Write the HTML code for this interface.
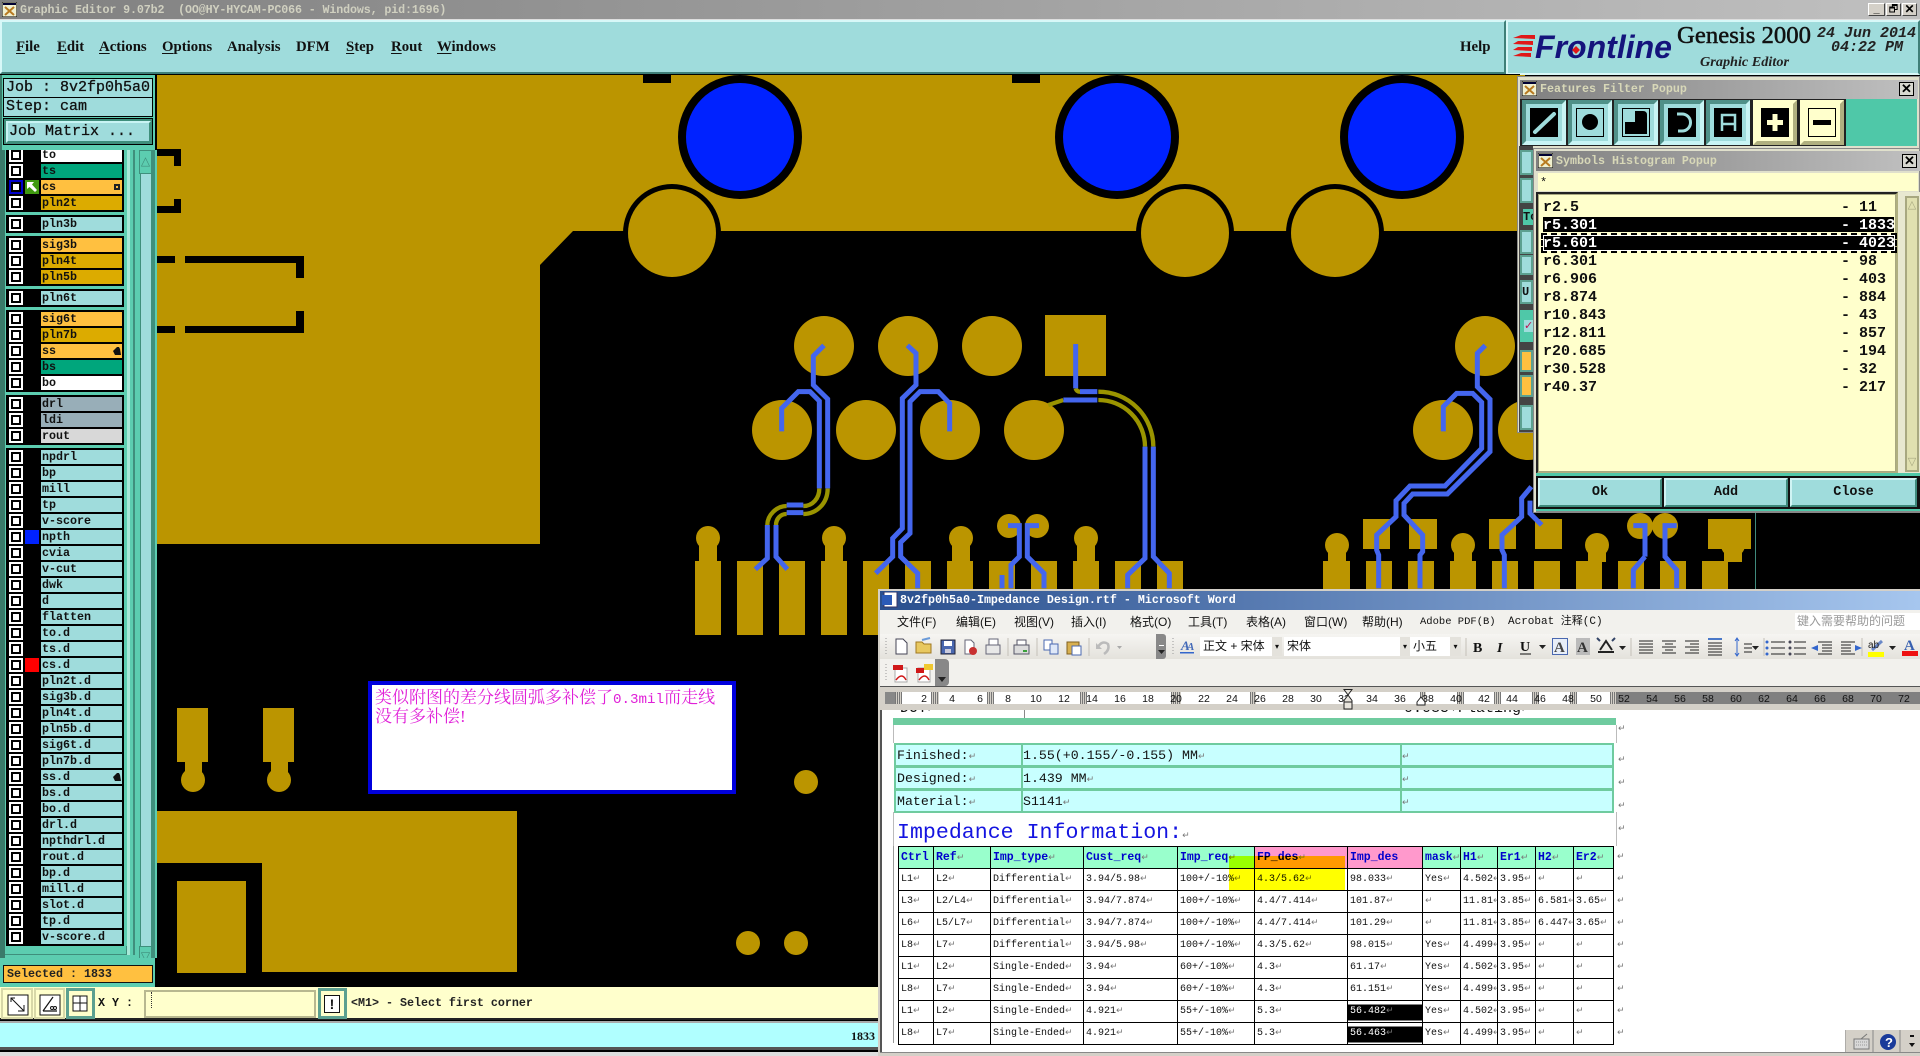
<!DOCTYPE html>
<html><head><meta charset="utf-8"><title>Graphic Editor</title>
<style>
html,body{margin:0;padding:0;width:1920px;height:1056px;overflow:hidden;background:#000}
div,span,b,table{box-sizing:border-box}
.a{position:absolute}
.m{font-family:"Liberation Mono","Noto Sans CJK SC",monospace}
.s{font-family:"Liberation Serif","Noto Serif CJK SC",serif}
.r{position:absolute;left:0;width:124px;height:14px}
.c{position:absolute;left:9px;top:0;width:14px;height:14px;background:#fff}
.c:after{content:"";position:absolute;left:2px;top:2px;width:10px;height:10px;border:2px solid #000;box-sizing:border-box}
.n{position:absolute;left:41px;top:0;width:81px;height:14px;line-height:14px;padding-left:1px;font:bold 11.67px/14px "Liberation Mono",monospace;color:#111;background:#9fdcdc;white-space:nowrap}
.o{background:#ffc040}.g{background:#dcab00}.t{background:#00a67c}.w{background:#fff}.b{background:#98aeb8}.e{background:#d8d8d8}
.grp{position:absolute;left:6px;width:118px;background:#000}
.menu{position:absolute;top:38px;font:bold 14.8px/18px "Liberation Serif",serif;color:#111}
.menu u{text-decoration-thickness:1px;text-underline-offset:2px}
.tb{background:linear-gradient(90deg,#808080,#c0c0c0);color:#d0d0c0;font:bold 11.67px/18px "Liberation Mono",monospace;white-space:pre}
.x{position:absolute;background:#d8d8d0;border:1px solid #000;width:15px;height:14px;font:bold 13px/12px "Liberation Sans",sans-serif;text-align:center;color:#000}
.fb{position:absolute;top:100px;width:44px;height:45px;background:#9fdcdc;border:4px solid;border-color:#4f9088 #c8f4f4 #c8f4f4 #4f9088}
.fb.y{background:#ffffcc;border-color:#ffffcc #b0b080 #b0b080 #ffffcc}
.fb svg{position:absolute;left:4px;top:4px}
.h{position:absolute;left:1543px;font:bold 15px/18px "Liberation Mono",monospace;color:#111;white-space:pre}
.h.sel{color:#fff}
.bt{position:absolute;top:478px;height:29px;background:#9fdcdc;border:2px solid;border-color:#d0f4f4 #3f8a7c #3f8a7c #d0f4f4;font:bold 13.5px/25px "Liberation Mono",monospace;text-align:center;color:#111}
.wm{position:absolute;top:614px;font:12px/16px "Liberation Sans","Noto Sans CJK SC",sans-serif;color:#111;white-space:nowrap}
.st{position:absolute;left:894px;width:720px;height:23px;background:#c8ffff;border:2px solid #6fcb9f;border-bottom-width:1px;font:13.25px/21px "Liberation Mono",monospace;color:#111}
.st span{position:absolute;top:0;white-space:nowrap}
.st span+span{border-left:2px solid #6fcb9f;height:21px;padding-left:2px}
i{font:normal 9px "DejaVu Sans",sans-serif;color:#777}
table{position:absolute;left:898px;top:846px;border-collapse:collapse;table-layout:fixed;width:735px;font:10px/14px "Liberation Mono",monospace;color:#111}
td{border:1px solid #000;height:21px;padding:0 0 0 2px;white-space:nowrap;overflow:hidden}
td.h1{background:#99ffcc;font:bold 11.5px/14px "Liberation Mono",monospace;color:#0000cc}
td.h2{background:#ff99cc;font:bold 11.5px/14px "Liberation Mono",monospace;color:#0000cc}
td.k{background:linear-gradient(#fff 3px,#000 3px,#000 19px,#fff 19px);color:#fff}
td.z{border:0;padding-left:3px}
.ov{position:absolute;mix-blend-mode:darken}
.mk{position:absolute;top:692px;height:12px;background:repeating-linear-gradient(90deg,#777 0 1px,#d4d0c8 1px 2px)}
</style></head>
<body>

<!-- PCB canvas -->
<svg class="a" style="left:0;top:0" width="1920" height="1056" viewBox="0 0 1920 1056">
<rect width="1920" height="1056" fill="#000"/>
<g fill="#bb9500">
<polygon points="157,75 1525,75 1525,231 573,231 540,265 540,544 157,544"/>
<polygon points="157,811 517,811 517,972 262,972 262,863 157,863"/>
<rect x="177" y="881" width="69" height="92"/>
<rect x="177" y="708" width="31" height="54"/><rect x="185" y="760" width="17" height="16"/><circle cx="193" cy="780" r="12"/>
<rect x="263" y="708" width="31" height="54"/><rect x="271" y="760" width="17" height="16"/><circle cx="279" cy="780" r="12"/>
<circle cx="806" cy="782" r="12"/><circle cx="748" cy="943" r="12"/><circle cx="796" cy="943" r="12"/>
</g>
<g fill="#000">
<path d="M157 149H181V166H174V156H157Z"/><path d="M174 199H181V213H157V206H174Z"/>
<path d="M157 256H175V263H157Z"/><path d="M185 256H304V278H296V263H185Z"/>
<path d="M157 326H175V333H157Z"/><path d="M185 333H304V311H296V326H185Z"/>
<rect x="643" y="75" width="28" height="8"/><rect x="1012" y="75" width="28" height="8"/>
<circle cx="740" cy="137" r="62"/><circle cx="1117" cy="137" r="62"/><circle cx="1402" cy="137" r="62"/>
<circle cx="672" cy="233" r="49"/><circle cx="1185" cy="233" r="49"/><circle cx="1335" cy="233" r="49"/>
<rect x="157" y="72" width="1400" height="3"/>
</g>
<g fill="#0022ff"><circle cx="740" cy="137" r="54"/><circle cx="1117" cy="137" r="54"/><circle cx="1402" cy="137" r="54"/></g>
<g fill="#bb9500">
<circle cx="672" cy="233" r="44"/><circle cx="1185" cy="233" r="44"/><circle cx="1335" cy="233" r="44"/>
<circle cx="824" cy="346" r="30"/><circle cx="908" cy="346" r="30"/><circle cx="992" cy="346" r="30"/>
<rect x="1045" y="315" width="61" height="61"/>
<circle cx="782" cy="430" r="30"/><circle cx="866" cy="430" r="30"/><circle cx="950" cy="430" r="30"/><circle cx="1034" cy="430" r="30"/>
<circle cx="1485" cy="346" r="30"/><circle cx="1443" cy="430" r="30"/><circle cx="1528" cy="430" r="30"/>
<rect x="695" y="561" width="26" height="74"/><rect x="737" y="561" width="26" height="74"/><rect x="779" y="561" width="26" height="74"/>
<rect x="821" y="561" width="26" height="74"/><rect x="863" y="561" width="26" height="74"/><rect x="905" y="561" width="26" height="74"/>
<rect x="947" y="561" width="26" height="74"/><rect x="989" y="561" width="26" height="74"/><rect x="1031" y="561" width="26" height="74"/>
<rect x="1073" y="561" width="26" height="74"/><rect x="1115" y="561" width="26" height="74"/><rect x="1157" y="561" width="26" height="74"/>
<rect x="1323" y="561" width="27" height="74"/><rect x="1366" y="561" width="26" height="74"/><rect x="1408" y="561" width="26" height="74"/>
<rect x="1450" y="561" width="26" height="74"/><rect x="1492" y="561" width="26" height="74"/><rect x="1534" y="561" width="26" height="74"/>
<rect x="1576" y="561" width="26" height="74"/><rect x="1618" y="561" width="26" height="74"/><rect x="1660" y="561" width="26" height="74"/>
<rect x="1702" y="561" width="26" height="74"/>
<rect x="1363" y="519" width="27" height="30"/><rect x="1409" y="519" width="28" height="30"/><rect x="1489" y="519" width="27" height="30"/><rect x="1535" y="519" width="27" height="30"/><rect x="1708" y="519" width="43" height="30"/>
<circle cx="708" cy="538" r="12"/><rect x="699" y="538" width="18" height="24"/>
<circle cx="834" cy="538" r="12"/><rect x="825" y="538" width="18" height="24"/>
<circle cx="961" cy="538" r="12"/><rect x="952" y="538" width="18" height="24"/>
<circle cx="1086" cy="538" r="12"/><rect x="1077" y="538" width="18" height="24"/>
<circle cx="1009" cy="526" r="12"/><circle cx="1037" cy="526" r="12"/>
<circle cx="1337" cy="545" r="12"/><rect x="1328" y="545" width="18" height="17"/>
<circle cx="1463" cy="545" r="12"/><rect x="1454" y="545" width="18" height="17"/>
<circle cx="1640" cy="526" r="13"/><circle cx="1665" cy="526" r="13"/>
<circle cx="1733" cy="545" r="12"/><rect x="1724" y="545" width="18" height="17"/>
<circle cx="1597" cy="545" r="12"/><rect x="1588" y="545" width="18" height="17"/>
</g>
<g transform="translate(680,290) scale(.33333)" fill="none" stroke-linejoin="miter">
<g stroke="#9a9400" stroke-width="13">
<path d="M443 595C443 640 410 672 370 672"/><path d="M320 672C300 672 288 688 288 705"/>
<path d="M418 595C418 625 398 648 370 648"/><path d="M320 648C290 648 262 675 262 705"/>
<path d="M1255 305A165 165 0 0 1 1420 470"/><path d="M1255 330A140 140 0 0 1 1395 470"/>
<path d="M1105 345L1150 330"/><path d="M1187 295Q1190 305 1200 305"/>
</g>
<g stroke="#4466ee" stroke-width="15">
<path d="M432 166L400 198V285L443 327V595"/><path d="M370 668H320"/><path d="M288 705V800L322 838"/>
<path d="M305 424V355L355 305H390L418 333V595"/><path d="M370 645H320"/><path d="M262 705V805L226 838"/>
<path d="M682 166L708 190V285L667 325V715L638 745V800L587 850"/>
<path d="M809 424V340L775 305H720L690 335V730L662 757V800L713 850V895"/>
<path d="M1187 162V295"/><path d="M1200 305H1252"/>
<path d="M1420 470V800L1468 850V895"/>
<path d="M1150 330H1252"/><path d="M1395 470V805L1343 855V895"/>
<path d="M984 707H1018V800L993 825V895"/><path d="M1077 707H1042V800L1092 850V895"/><path d="M966 855V895"/>
</g></g>
<g transform="translate(1300,290) scale(.33333)" fill="none" stroke="#4466ee" stroke-width="15">
<path d="M556 166L532 190V290L570 328V485L442 612H338L312 640V675L368 735V785L360 795V895"/>
<path d="M430 424V350L470 310H518L545 337V475L435 588H330L288 632V680L230 735V780L236 795V895"/>
<path d="M694 590L665 625V680L606 735V780L613 795V895"/>
<path d="M690 632V670L725 705"/>
<path d="M1000 707H1035V800"/><path d="M1130 707H1095V800L1130 840V895"/><path d="M1035 800L1000 840V895"/>
</g>
<rect x="1755" y="513" width="1" height="77" fill="#3f8a7c"/>
</svg>

<!-- note -->
<div class="a" style="left:368px;top:681px;width:368px;height:113px;background:#fff;border:4px solid #0000dd;padding:4px 0 0 3px;font:17px/18px 'Liberation Serif','Noto Serif CJK SC',serif;color:#e020d8;white-space:nowrap">类似附图的差分线圆弧多补偿了<span style="font:14.2px 'Liberation Mono',monospace">0.3mil</span>而走线<br>没有多补偿!</div>

<!-- left panel -->
<div class="a" style="left:0;top:147px;width:157px;height:838px;background:#5ccdb0"></div>
<div class="a" style="left:0;top:147px;width:5px;height:838px;background:#3a7a6a"></div>
<div class="a" style="left:127px;top:147px;width:3px;height:808px;background:#a8e8d8"></div>
<div class="a" style="left:133px;top:147px;width:2px;height:808px;background:#3f8f7c"></div>
<div class="a" style="left:140px;top:147px;width:12px;height:811px;background:#9fdcdc;border:1px solid #3f8f7c"></div>
<div class="a" style="left:152px;top:75px;width:3px;height:910px;background:#3f8f7c"></div>
<div class="a" style="left:139px;top:150px;width:13px;height:24px;background:#5ccdb0;border:1px solid #3f8f7c;text-align:center;font:12px/20px 'DejaVu Sans',sans-serif;color:#3f8f7c">△</div>
<div class="a" style="left:139px;top:946px;width:13px;height:22px;background:#5ccdb0;border:1px solid #3f8f7c;text-align:center;font:12px/18px 'DejaVu Sans',sans-serif;color:#3f8f7c">▽</div>
<div class="a" style="left:5px;top:946px;width:122px;height:9px;background:#5ccdb0;border-bottom:1px solid #3f8f7c;border-right:1px solid #3f8f7c"></div>

<div class="grp" style="top:147px;height:65px"></div>
<div class="grp" style="top:215px;height:18px"></div>
<div class="grp" style="top:236px;height:50px"></div>
<div class="grp" style="top:289px;height:18px"></div>
<div class="grp" style="top:310px;height:82px"></div>
<div class="grp" style="top:395px;height:50px"></div>
<div class="grp" style="top:448px;height:498px"></div>

<div class="r" style="top:148px"><b class="c"></b><span class="n w">to</span></div>
<div class="r" style="top:164px"><b class="c"></b><span class="n t">ts</span></div>
<div class="r" style="top:180px"><b class="c" style="outline:2px solid #0000cc;outline-offset:-2px"></b><span class="a" style="left:25px;top:0;width:14px;height:14px;background:#3f9a10"><svg width="14" height="14"><path d="M2 2H9L7 4.5 12 10 10 12 4.5 7 2 9Z" fill="#fff"/></svg></span><span class="n o">cs<span class="a" style="left:73px;top:4px;width:6px;height:6px;background:#222;border:1px solid #222;outline:1px solid #ffc040;outline-offset:-3px"></span></span></div>
<div class="r" style="top:196px"><b class="c"></b><span class="n g">pln2t</span></div>
<div class="r" style="top:217px"><b class="c"></b><span class="n">pln3b</span></div>
<div class="r" style="top:238px"><b class="c"></b><span class="n o">sig3b</span></div>
<div class="r" style="top:254px"><b class="c"></b><span class="n g">pln4t</span></div>
<div class="r" style="top:270px"><b class="c"></b><span class="n g">pln5b</span></div>
<div class="r" style="top:291px"><b class="c"></b><span class="n">pln6t</span></div>
<div class="r" style="top:312px"><b class="c"></b><span class="n o">sig6t</span></div>
<div class="r" style="top:328px"><b class="c"></b><span class="n g">pln7b</span></div>
<div class="r" style="top:344px"><b class="c"></b><span class="n o">ss<svg class="a" style="left:72px;top:2px" width="8" height="10"><path d="M0 5L4 1 6 1 7 3 8 9H2Z" fill="#111"/></svg></span></div>
<div class="r" style="top:360px"><b class="c"></b><span class="n t">bs</span></div>
<div class="r" style="top:376px"><b class="c"></b><span class="n w">bo</span></div>
<div class="r" style="top:397px"><b class="c"></b><span class="n b">drl</span></div>
<div class="r" style="top:413px"><b class="c"></b><span class="n b">ldi</span></div>
<div class="r" style="top:429px"><b class="c"></b><span class="n e">rout</span></div>
<div class="r" style="top:450px"><b class="c"></b><span class="n">npdrl</span></div>
<div class="r" style="top:466px"><b class="c"></b><span class="n">bp</span></div>
<div class="r" style="top:482px"><b class="c"></b><span class="n">mill</span></div>
<div class="r" style="top:498px"><b class="c"></b><span class="n">tp</span></div>
<div class="r" style="top:514px"><b class="c"></b><span class="n">v-score</span></div>
<div class="r" style="top:530px"><b class="c"></b><span class="a" style="left:25px;top:0;width:14px;height:14px;background:#0022ff"></span><span class="n">npth</span></div>
<div class="r" style="top:546px"><b class="c"></b><span class="n">cvia</span></div>
<div class="r" style="top:562px"><b class="c"></b><span class="n">v-cut</span></div>
<div class="r" style="top:578px"><b class="c"></b><span class="n">dwk</span></div>
<div class="r" style="top:594px"><b class="c"></b><span class="n">d</span></div>
<div class="r" style="top:610px"><b class="c"></b><span class="n">flatten</span></div>
<div class="r" style="top:626px"><b class="c"></b><span class="n">to.d</span></div>
<div class="r" style="top:642px"><b class="c"></b><span class="n">ts.d</span></div>
<div class="r" style="top:658px"><b class="c"></b><span class="a" style="left:25px;top:0;width:14px;height:14px;background:#f00"></span><span class="n">cs.d</span></div>
<div class="r" style="top:674px"><b class="c"></b><span class="n">pln2t.d</span></div>
<div class="r" style="top:690px"><b class="c"></b><span class="n">sig3b.d</span></div>
<div class="r" style="top:706px"><b class="c"></b><span class="n">pln4t.d</span></div>
<div class="r" style="top:722px"><b class="c"></b><span class="n">pln5b.d</span></div>
<div class="r" style="top:738px"><b class="c"></b><span class="n">sig6t.d</span></div>
<div class="r" style="top:754px"><b class="c"></b><span class="n">pln7b.d</span></div>
<div class="r" style="top:770px"><b class="c"></b><span class="n">ss.d<svg class="a" style="left:72px;top:2px" width="8" height="10"><path d="M0 5L4 1 6 1 7 3 8 9H2Z" fill="#111"/></svg></span></div>
<div class="r" style="top:786px"><b class="c"></b><span class="n">bs.d</span></div>
<div class="r" style="top:802px"><b class="c"></b><span class="n">bo.d</span></div>
<div class="r" style="top:818px"><b class="c"></b><span class="n">drl.d</span></div>
<div class="r" style="top:834px"><b class="c"></b><span class="n">npthdrl.d</span></div>
<div class="r" style="top:850px"><b class="c"></b><span class="n">rout.d</span></div>
<div class="r" style="top:866px"><b class="c"></b><span class="n">bp.d</span></div>
<div class="r" style="top:882px"><b class="c"></b><span class="n">mill.d</span></div>
<div class="r" style="top:898px"><b class="c"></b><span class="n">slot.d</span></div>
<div class="r" style="top:914px"><b class="c"></b><span class="n">tp.d</span></div>
<div class="r" style="top:930px"><b class="c"></b><span class="n">v-score.d</span></div>

<!-- job panel -->
<div class="a" style="left:0;top:75px;width:157px;height:75px;background:#5ccdb0;border-left:2px solid #3a7a6a;border-right:2px solid #000"></div>
<div class="a m" style="left:3px;top:78px;width:150px;height:20px;background:#9fdcdc;border:1px solid #000;font-size:15px;line-height:18px;padding-left:2px;color:#111;-webkit-text-stroke:.3px #111;white-space:pre">Job : 8v2fp0h5a0</div>
<div class="a m" style="left:3px;top:97px;width:150px;height:20px;background:#9fdcdc;border:1px solid #000;font-size:15px;line-height:18px;padding-left:2px;color:#111;-webkit-text-stroke:.3px #111;white-space:pre">Step: cam</div>
<div class="a" style="left:3px;top:118px;width:150px;height:27px;background:#3f8f7c;border:1px solid #000"></div>
<div class="a m" style="left:6px;top:121px;width:145px;height:22px;background:#9fdcdc;border:2px solid;border-color:#c8f4f4 #3f8f7c #3f8f7c #c8f4f4;font-size:15px;line-height:18px;padding-left:1px;color:#111;-webkit-text-stroke:.3px #111;white-space:pre">Job Matrix ...</div>

<!-- selected -->
<div class="a" style="left:0;top:958px;width:157px;height:29px;background:#5ccdb0;border-right:2px solid #000"></div>
<div class="a m" style="left:3px;top:965px;width:150px;height:18px;background:#ffc040;border:1px solid #111;font-size:11.67px;font-weight:bold;line-height:16px;padding-left:3px;color:#222;white-space:pre">Selected : 1833</div>

<!-- title + menu -->
<div class="a tb" style="left:0;top:0;width:1920px;height:20px;padding:1px 0 0 20px;border-bottom:1px solid #ddd;letter-spacing:-.12px">Graphic Editor 9.07b2  (OO@HY-HYCAM-PC066 - Windows, pid:1696)</div>
<svg class="a" style="left:2px;top:2px" width="15" height="15"><rect width="15" height="15" fill="#f0f0d0" stroke="#000"/><rect x="1" y="1" width="13" height="2" fill="#003"/><path d="M3 5L12 13M12 5L3 13" stroke="#b87a20" stroke-width="2"/></svg>
<div class="a" style="left:1868px;top:3px;width:17px;height:13px;background:#d4d0c8;border:1px solid #666;border-color:#fff #444 #444 #fff;font:bold 11px/10px 'Liberation Sans';text-align:center;color:#000">_</div>
<div class="a" style="left:1886px;top:3px;width:15px;height:13px;background:#d4d0c8;border:1px solid #666;border-color:#fff #444 #444 #fff;font:10px/11px 'DejaVu Sans';text-align:center;color:#000">🗗</div>
<div class="a" style="left:1902px;top:3px;width:15px;height:13px;background:#d4d0c8;border:1px solid #666;border-color:#fff #444 #444 #fff;font:bold 12px/11px 'Liberation Sans';text-align:center;color:#000">✕</div>
<div class="a" style="left:0;top:20px;width:1506px;height:54px;background:#9fdcdc;border:2px solid;border-color:#d8f8f8 #3f7f78 #3f7f78 #d8f8f8"></div>
<div class="a" style="left:1506px;top:20px;width:414px;height:55px;background:#9fdcdc;border:2px solid;border-color:#d8f8f8 #3f7f78 #d8f8f8 #d8f8f8"></div>
<div class="a" style="left:0;top:74px;width:1520px;height:1px;background:#000"></div>
<span class="menu" style="left:16px"><u>F</u>ile</span><span class="menu" style="left:57px"><u>E</u>dit</span><span class="menu" style="left:99px"><u>A</u>ctions</span><span class="menu" style="left:162px"><u>O</u>ptions</span><span class="menu" style="left:227px">Analysis</span><span class="menu" style="left:296px">DFM</span><span class="menu" style="left:346px"><u>S</u>tep</span><span class="menu" style="left:391px"><u>R</u>out</span><span class="menu" style="left:437px"><u>W</u>indows</span><span class="menu" style="left:1460px">Help</span>

<!-- logo -->
<svg class="a" style="left:1507px;top:20px" width="413" height="55" viewBox="1507 20 413 55">
<g fill="#e01818"><polygon points="1535,35 1521,35 1513,38 1535,39"/><polygon points="1533,41 1518,41 1513,44 1533,45"/><polygon points="1532,47 1518,47 1513,50 1532,51"/><polygon points="1531,53 1521,53 1513,56 1531,57"/></g>
<text x="1535" y="58" font-family="Liberation Sans" font-weight="bold" font-style="italic" font-size="32" fill="#14147c" textLength="137" lengthAdjust="spacingAndGlyphs">Frontline</text>
<polygon points="1576,46 1580,50 1576,54 1572,50" fill="#e01818"/>
<text x="1677" y="43" font-family="Liberation Serif" font-size="24.5" fill="#111" textLength="134" lengthAdjust="spacingAndGlyphs" stroke="#111" stroke-width=".5">Genesis 2000</text>
<text x="1700" y="66" font-family="Liberation Serif" font-weight="bold" font-style="italic" font-size="13.5" fill="#222" textLength="89" lengthAdjust="spacingAndGlyphs">Graphic Editor</text>
<text x="1817" y="37" font-family="Liberation Mono" font-weight="bold" font-style="italic" font-size="15" fill="#222">24 Jun 2014</text>
<text x="1831" y="51" font-family="Liberation Mono" font-weight="bold" font-style="italic" font-size="15" fill="#222">04:22 PM</text>
</svg>

<!-- bottom toolbar -->
<div class="a" style="left:0;top:987px;width:880px;height:33px;background:#ffffcc;border-bottom:2px solid #222"></div>
<div class="a" style="left:1px;top:988px;width:32px;height:31px;background:#ffffcc;border:2px solid #d8d8a8"></div>
<div class="a" style="left:34px;top:988px;width:31px;height:31px;background:#ffffcc;border:2px solid #d8d8a8"></div>
<div class="a" style="left:66px;top:988px;width:29px;height:31px;background:#ffffcc;border:3px solid #5ca090"></div>
<svg class="a" style="left:0;top:987px" width="100" height="33">
<rect x="8" y="8" width="20" height="20" fill="#fff" stroke="#111"/><path d="M11 11L24 24M24 18V24H18M11 15V11H15" fill="none" stroke="#111"/>
<rect x="40" y="8" width="20" height="20" fill="#fff" stroke="#111"/><path d="M43 24L53 10M43 24H57" fill="none" stroke="#111" stroke-width="1.2"/><circle cx="52" cy="21" r="1.5" fill="none" stroke="#111"/><circle cx="55" cy="21" r="1.5" fill="none" stroke="#111"/>
<rect x="73" y="9" width="14" height="15" fill="#fff" stroke="#111"/><path d="M73 16H87M80 9V24" stroke="#111"/>
</svg>
<div class="a m" style="left:98px;top:995px;font-size:11.67px;font-weight:bold;line-height:16px;color:#111;white-space:pre">X Y :</div>
<div class="a" style="left:144px;top:990px;width:172px;height:28px;background:#ffffcc;border:2px solid #b8b890"></div>
<div class="a" style="left:151px;top:992px;width:1px;height:16px;border-left:1px dotted #333"></div>
<div class="a" style="left:318px;top:988px;width:29px;height:31px;background:#ffffcc;border:3px solid #5ca090"></div>
<div class="a" style="left:324px;top:995px;width:16px;height:18px;background:#fff;border:1px solid #111;font:bold 14px/16px 'Liberation Sans';text-align:center;color:#111">!</div>
<div class="a m" style="left:351px;top:995px;font-size:11.67px;font-weight:bold;line-height:16px;color:#222;white-space:pre">&lt;M1&gt; - Select first corner</div>
<div class="a" style="left:0;top:1021px;width:880px;height:29px;background:#b0ffff;border-top:2px solid #aaa;border-bottom:3px solid #555"></div>
<div class="a" style="left:851px;top:1028px;font:bold 12px/16px 'Liberation Serif';color:#111">1833</div>
<div class="a" style="left:0;top:1050px;width:880px;height:2px;background:#000"></div>
<div class="a" style="left:0;top:1052px;width:880px;height:4px;background:#ddd"></div>

<!-- features popup -->
<div class="a" style="left:1517px;top:76px;width:403px;height:357px;background:#e0e0cc;border:1px solid #888"></div>
<div class="a tb" style="left:1520px;top:80px;width:398px;height:19px;padding-left:20px;color:#d8d8b8">Features Filter Popup</div>
<svg class="a" style="left:1522px;top:81px" width="15" height="15"><rect width="15" height="15" fill="#f0f0d0" stroke="#000"/><rect x="1" y="1" width="13" height="2" fill="#003"/><path d="M3 5L12 13M12 5L3 13" stroke="#b87a20" stroke-width="2"/></svg>
<div class="x" style="left:1899px;top:82px">✕</div>
<div class="a" style="left:1520px;top:99px;width:397px;height:47px;background:#4fc8a8"></div>
<div class="a" style="left:1520px;top:99px;width:326px;height:47px;background:#222"></div>
<div class="fb" style="left:1522px"><svg width="28" height="29"><rect width="28" height="29" fill="#000"/><path d="M5 24L24 6" stroke="#9fdcdc" stroke-width="4" stroke-linecap="round"/></svg></div>
<div class="fb" style="left:1568px"><svg width="28" height="29"><rect x=".5" y=".5" width="27" height="28" fill="#9fdcdc" stroke="#000"/><circle cx="14" cy="14" r="8" fill="#000"/></svg></div>
<div class="fb" style="left:1614px"><svg width="28" height="29"><rect x=".5" y=".5" width="27" height="28" fill="#9fdcdc" stroke="#000"/><path d="M3 14H13V3H21Q25 3 25 7V26H3Z" fill="#000"/></svg></div>
<div class="fb" style="left:1660px"><svg width="28" height="29"><rect width="28" height="29" fill="#000"/><path d="M9 6H14A8.500 8.500 0 0 1 14 23H10" fill="none" stroke="#9fdcdc" stroke-width="3"/></svg></div>
<div class="fb" style="left:1706px"><svg width="28" height="29"><rect width="28" height="29" fill="#000"/><path d="M8 23V7H21V23M8 16H21" fill="none" stroke="#9fdcdc" stroke-width="2.500"/></svg></div>
<div class="fb y" style="left:1753px"><svg width="28" height="29"><rect width="28" height="29" fill="#000"/><path d="M14 6V23M6 14.500H22" stroke="#ffffcc" stroke-width="5"/></svg></div>
<div class="fb y" style="left:1800px"><svg width="28" height="29"><rect x=".5" y=".5" width="27" height="28" fill="#ffffcc" stroke="#000"/><rect x="5" y="12" width="18" height="5" fill="#000"/></svg></div>
<div class="a" style="left:1519px;top:146px;width:14px;height:286px;background:#444"></div>
<div class="a" style="left:1520px;top:150px;width:13px;height:25px;background:#9fdcdc;border:2px solid #5ca090"></div>
<div class="a" style="left:1520px;top:178px;width:13px;height:25px;background:#9fdcdc;border:2px solid #5ca090"></div>
<div class="a m" style="left:1523px;top:209px;width:10px;height:16px;font-size:12px;font-weight:bold;line-height:16px;color:#111;background:#4fc8a8;overflow:hidden">To</div>
<div class="a" style="left:1520px;top:230px;width:13px;height:24px;background:#9fdcdc;border:2px solid #5ca090"></div>
<div class="a" style="left:1520px;top:255px;width:13px;height:20px;background:#9fdcdc;border:2px solid #5ca090"></div>
<div class="a m" style="left:1520px;top:280px;width:13px;height:24px;background:#9fdcdc;border:2px solid #5ca090;font-size:12px;font-weight:bold;line-height:20px;color:#111;overflow:hidden">U</div>
<div class="a" style="left:1520px;top:310px;width:13px;height:32px;background:#4fc8a8"></div>
<div class="a" style="left:1524px;top:320px;width:9px;height:12px;background:#9fdcdc;color:#c01050;font:bold 11px/12px 'DejaVu Sans';overflow:hidden">✓</div>
<div class="a" style="left:1520px;top:350px;width:13px;height:22px;background:#ffc040;border:2px solid #5ca090"></div>
<div class="a" style="left:1520px;top:375px;width:13px;height:22px;background:#ffc040;border:2px solid #5ca090"></div>
<div class="a" style="left:1520px;top:405px;width:13px;height:25px;background:#9fdcdc;border:2px solid #5ca090"></div>

<!-- symbols popup -->
<div class="a" style="left:1533px;top:148px;width:387px;height:365px;background:#e0e0cc;border:1px solid #888"></div>
<div class="a tb" style="left:1536px;top:151px;width:384px;height:20px;padding:1px 0 0 20px;color:#d8d8b8">Symbols Histogram Popup</div>
<svg class="a" style="left:1538px;top:153px" width="15" height="15"><rect width="15" height="15" fill="#f0f0d0" stroke="#000"/><rect x="1" y="1" width="13" height="2" fill="#003"/><path d="M3 5L12 13M12 5L3 13" stroke="#b87a20" stroke-width="2"/></svg>
<div class="x" style="left:1902px;top:154px">✕</div>
<div class="a m" style="left:1538px;top:173px;width:380px;height:18px;background:#ffffcc;padding:2px 0 0 2px;font-size:12px;line-height:17px;color:#111">*</div>
<div class="a" style="left:1536px;top:192px;width:362px;height:282px;background:#ffffcc;border:2px solid #222;border-right-color:#b0b080;border-bottom-color:#b0b080;outline:1px solid #a8a880;outline-offset:-3px"></div>
<div class="a" style="left:1898px;top:192px;width:22px;height:282px;background:#e8e8d0"></div>
<div class="a" style="left:1905px;top:196px;width:14px;height:276px;background:#e0e0b0;border:2px solid #a8a880;text-align:center;font:11px/14px 'DejaVu Sans';color:#a8a880">△</div>
<div class="a" style="left:1907px;top:455px;width:10px;height:14px;text-align:center;font:11px/14px 'DejaVu Sans';color:#a8a880">▽</div>
<div class="a" style="left:1543px;top:217px;width:351px;height:15px;background:#000"></div>
<div class="a" style="left:1541px;top:233px;width:356px;height:20px;border:2px dashed #000"></div>
<div class="a" style="left:1543px;top:235px;width:352px;height:16px;background:#000;border:1px solid #fff"></div>
<div class="h" style="top:199px">r2.5</div><div class="h" style="top:199px;left:1841px">- 11</div>
<div class="h sel" style="top:217px">r5.301</div><div class="h sel" style="top:217px;left:1841px">- 1833</div>
<div class="h sel" style="top:235px">r5.601</div><div class="h sel" style="top:235px;left:1841px">- 4023</div>
<div class="h" style="top:253px">r6.301</div><div class="h" style="top:253px;left:1841px">- 98</div>
<div class="h" style="top:271px">r6.906</div><div class="h" style="top:271px;left:1841px">- 403</div>
<div class="h" style="top:289px">r8.874</div><div class="h" style="top:289px;left:1841px">- 884</div>
<div class="h" style="top:307px">r10.843</div><div class="h" style="top:307px;left:1841px">- 43</div>
<div class="h" style="top:325px">r12.811</div><div class="h" style="top:325px;left:1841px">- 857</div>
<div class="h" style="top:343px">r20.685</div><div class="h" style="top:343px;left:1841px">- 194</div>
<div class="h" style="top:361px">r30.528</div><div class="h" style="top:361px;left:1841px">- 32</div>
<div class="h" style="top:379px">r40.37</div><div class="h" style="top:379px;left:1841px">- 217</div>
<div class="a" style="left:1536px;top:473px;width:384px;height:39px;background:#4fc8a8;border-bottom:1px solid #888"></div>
<div class="a" style="left:1536px;top:476px;width:384px;height:33px;background:#111"></div>
<div class="bt" style="left:1538px;width:124px">Ok</div>
<div class="bt" style="left:1664px;width:124px">Add</div>
<div class="bt" style="left:1790px;width:127px">Close</div>

<!-- WORD -->
<div class="a" style="left:878px;top:589px;width:1042px;height:467px;background:#fff;border-top:2px solid #d4d0c8;border-left:2px solid #d4d0c8"></div>
<div class="a" style="left:880px;top:591px;width:1040px;height:19px;background:linear-gradient(90deg,#2a4f8e,#a6c6ee);font:bold 11.67px/19px 'Liberation Mono',monospace;color:#fff;padding-left:20px;white-space:pre">8v2fp0h5a0-Impedance Design.rtf - Microsoft Word</div>
<svg class="a" style="left:882px;top:592px" width="16" height="16"><rect x="2" width="13" height="15" fill="#fff" stroke="#336"/><rect y="3" width="10" height="10" fill="#2a5ab8"/></svg>
<div class="a" style="left:880px;top:610px;width:1040px;height:24px;background:#f2f1ed"></div>
<div class="a" style="left:880px;top:634px;width:1040px;height:25px;background:linear-gradient(#f6f5f2,#e4e2dc)"></div>
<div class="a" style="left:880px;top:659px;width:1040px;height:27px;background:#f2f1ed"></div>
<div class="a" style="left:880px;top:686px;width:1040px;height:24px;background:#d4d0c8;border-top:1px solid #555"></div>
<span class="wm" style="left:897px">文件(F)</span><span class="wm" style="left:956px">编辑(E)</span><span class="wm" style="left:1014px">视图(V)</span><span class="wm" style="left:1071px">插入(I)</span><span class="wm" style="left:1130px">格式(O)</span><span class="wm" style="left:1188px">工具(T)</span><span class="wm" style="left:1246px">表格(A)</span><span class="wm" style="left:1304px">窗口(W)</span><span class="wm" style="left:1362px">帮助(H)</span>
<span class="wm m" style="left:1420px;font-size:10.5px;font-family:'Liberation Mono',monospace">Adobe PDF(B)</span>
<span class="wm" style="left:1508px;font-size:11px;font-family:'Liberation Mono','Noto Sans CJK SC',monospace">Acrobat 注释(C)</span>
<div class="a" style="left:1795px;top:613px;width:125px;height:17px;background:#fff"></div>
<span class="wm" style="left:1797px;top:613px;color:#999">键入需要帮助的问题</span>

<!-- toolbar controls -->
<div class="a" style="left:1156px;top:634px;width:10px;height:25px;background:#888;border-radius:0 3px 3px 0"></div>
<div class="a" style="left:935px;top:659px;width:14px;height:27px;background:#888;border-radius:0 4px 4px 0"></div>
<div class="a" style="left:1200px;top:637px;width:72px;height:19px;background:#fff;font:12px/18px 'Liberation Sans','Noto Sans CJK SC',sans-serif;color:#111;padding-left:3px;white-space:pre">正文 + 宋体</div>
<div class="a" style="left:1272px;top:637px;width:10px;height:19px;background:#e4e2dc;font:8px/19px 'DejaVu Sans';text-align:center;color:#111">▾</div>
<div class="a" style="left:1284px;top:637px;width:116px;height:19px;background:#fff;font:12px/18px 'Liberation Sans','Noto Sans CJK SC',sans-serif;color:#111;padding-left:3px">宋体</div>
<div class="a" style="left:1400px;top:637px;width:10px;height:19px;background:#e4e2dc;font:8px/19px 'DejaVu Sans';text-align:center;color:#111">▾</div>
<div class="a" style="left:1410px;top:637px;width:40px;height:19px;background:#fff;font:12px/18px 'Liberation Sans','Noto Sans CJK SC',sans-serif;color:#111;padding-left:3px">小五</div>
<div class="a" style="left:1450px;top:637px;width:11px;height:19px;background:#e4e2dc;font:8px/19px 'DejaVu Sans';text-align:center;color:#111">▾</div>
<svg class="a" style="left:880px;top:634px" width="1040" height="52" viewBox="880 634 1040 52" font-family="Liberation Serif">
<g fill="none" stroke="#999" stroke-dasharray="1 2"><path d="M886 638V656M1173 638V656M886 664V682"/></g>
<path d="M896 639H903L907 643V654H896Z" fill="#fff" stroke="#445"/>
<path d="M916 642H922L924 644H931V653H916Z" fill="#e8c860" stroke="#a07820"/><path d="M922 640L930 638" stroke="#6a9ad8" stroke-width="2"/>
<rect x="941" y="640" width="14" height="14" fill="#4a68b0" stroke="#223"/><rect x="944" y="641" width="8" height="5" fill="#fff"/><rect x="945" y="649" width="6" height="4" fill="#ccd"/>
<path d="M965 640H971L974 643V654H965Z" fill="#fff" stroke="#667"/><circle cx="973" cy="651" r="4" fill="#c83030"/>
<rect x="986" y="645" width="14" height="9" fill="#e8e8e8" stroke="#667"/><rect x="989" y="639" width="9" height="6" fill="#fff" stroke="#667"/>
<path d="M1008 638V656M1037 638V656M1089 638V656M1466 638V656M1631 638V656M1764 638V656M1862 638V656" stroke="#c4c0b8"/>
<rect x="1014" y="645" width="15" height="9" fill="#dcdcdc" stroke="#556"/><rect x="1017" y="640" width="9" height="5" fill="#fff" stroke="#556"/><rect x="1023" y="650" width="4" height="2" fill="#3aa03a"/>
<rect x="1044" y="640" width="8" height="10" fill="#fff" stroke="#4a68b0"/><rect x="1050" y="644" width="8" height="10" fill="#dfe8f8" stroke="#4a68b0"/>
<rect x="1067" y="642" width="12" height="12" fill="#d8b050" stroke="#806020"/><rect x="1072" y="646" width="9" height="9" fill="#fff" stroke="#4a68b0"/>
<path d="M1098 647Q1102 640 1108 644Q1110 650 1104 654" fill="none" stroke="#bbb" stroke-width="2.500"/><path d="M1096 643V649H1102Z" fill="#bbb"/>
<path d="M1117 646H1122L1119.500 649Z" fill="#aaa"/>
<rect x="1159" y="645" width="5" height="1" fill="#fff"/><path d="M1158 650H1165L1161.500 654Z" fill="#222"/>
<rect x="1180" y="652" width="14" height="1.500" fill="#36c"/>
<text x="1181" y="650" font-size="13" font-style="italic" font-weight="bold" fill="#446ab8">A</text><text x="1187" y="650" font-size="11" font-style="italic" font-weight="bold" fill="#446ab8">A</text>
<text x="1473" y="652" font-size="14" font-weight="bold" fill="#111">B</text>
<text x="1497" y="652" font-size="14" font-style="italic" font-weight="bold" fill="#111">I</text>
<text x="1520" y="651" font-size="14" font-weight="bold" fill="#111">U</text><path d="M1520 654H1531" stroke="#111"/>
<path d="M1539 645H1546L1542.500 649Z" fill="#222"/>
<rect x="1552.500" y="638.500" width="15" height="16" fill="#e8eef8" stroke="#4a68b0"/><text x="1554" y="652" font-size="15" font-weight="bold" fill="#444">A</text>
<rect x="1576" y="638" width="14" height="17" fill="#bbb"/><text x="1577" y="652" font-size="15" font-weight="bold" fill="#333">A</text>
<path d="M1600 650L1606 641 1612 650M1598 652H1614" fill="none" stroke="#222" stroke-width="2"/><path d="M1600 641L1597 638M1612 641L1615 638" stroke="#346" stroke-width="2"/>
<path d="M1619 646H1626L1622.500 650Z" fill="#222"/>
<g stroke="#222"><path d="M1639 641H1653M1639 644H1653M1639 647H1653M1639 650H1653M1639 653H1653"/>
<path d="M1662 641H1676M1665 644H1673M1662 647H1676M1665 650H1673M1662 653H1676"/>
<path d="M1685 641H1699M1690 644H1699M1685 647H1699M1690 650H1699M1685 653H1699"/>
<path d="M1708 643H1722M1708 646H1722M1708 649H1722M1708 652H1722M1708 655H1722"/>
<path d="M1744 644H1752M1744 648H1752M1744 652H1752M1771 642H1785M1771 648H1785M1771 654H1785"/>
<path d="M1794 642H1806M1794 648H1806M1794 654H1806"/>
<path d="M1818 642H1832M1822 645H1832M1822 648H1832M1822 651H1832M1818 654H1832M1841 642H1855M1841 645H1851M1841 648H1851M1841 651H1851M1841 654H1855"/></g>
<path d="M1708 639H1722" stroke="#4a78c8" stroke-width="2"/><path d="M1737 639V656M1735 641L1737 638 1739 641M1735 653L1737 656 1739 653" stroke="#36c" fill="none"/>
<path d="M1752 646H1759L1755.500 650Z" fill="#222"/>
<g fill="#36c"><circle cx="1767" cy="642" r="1.500"/><circle cx="1767" cy="648" r="1.500"/><circle cx="1767" cy="654" r="1.500"/></g><g fill="#445"><circle cx="1790" cy="642" r="1.500"/><circle cx="1790" cy="648" r="1.500"/><circle cx="1790" cy="654" r="1.500"/></g>
<path d="M1811 648L1818 645V651ZM1862 648L1855 645V651Z" fill="#36c"/>
<rect x="1868" y="652" width="16" height="5" fill="#ffff00"/><path d="M1872 650L1882 641" stroke="#6a88c8" stroke-width="3"/><text x="1868" y="648" font-size="10" font-family="Liberation Sans" fill="#222">ab</text>
<path d="M1889 646H1896L1892.500 650Z" fill="#222"/>
<rect x="1902" y="651" width="16" height="5" fill="#ee1111"/><text x="1904" y="650" font-size="15" font-weight="bold" fill="#3860b0">A</text>
<path d="M895 668H907V682H895Z" fill="#fff" stroke="#aaa"/><rect x="893" y="665" width="10" height="5" fill="#d01818"/><path d="M896 680Q902 672 906 680" fill="none" stroke="#d01818" stroke-width="1.500"/>
<path d="M918 668H930V682H918Z" fill="#fff" stroke="#aaa"/><rect x="916" y="668" width="8" height="5" fill="#d01818"/><rect x="924" y="664" width="9" height="6" fill="#f0c830"/><path d="M919 680Q925 672 929 680" fill="none" stroke="#d01818" stroke-width="1.500"/>
<path d="M938 677H946L942 682Z" fill="#222"/>
</svg>

<!-- ruler -->
<div class="a" style="left:885px;top:692px;width:725px;height:12px;background:#fff"></div>
<div class="a" style="left:885px;top:692px;width:10px;height:12px;background:#888"></div>
<div class="a" style="left:1610px;top:692px;width:310px;height:12px;background:#808080"></div>
<div class="mk" style="left:895px;width:7px"></div><div class="mk" style="left:931px;width:8px"></div><div class="mk" style="left:987px;width:7px"></div><div class="mk" style="left:1080px;width:7px"></div><div class="mk" style="left:1171px;width:10px"></div><div class="mk" style="left:1250px;width:6px"></div><div class="mk" style="left:1420px;width:6px"></div><div class="mk" style="left:1457px;width:7px"></div><div class="mk" style="left:1494px;width:7px"></div><div class="mk" style="left:1532px;width:7px"></div><div class="mk" style="left:1570px;width:7px"></div><div class="mk" style="left:1610px;width:7px"></div>
<svg class="a" style="left:880px;top:686px" width="1040" height="24" viewBox="880 0 1040 24" font-family="Liberation Sans" font-size="10.500" text-anchor="middle" fill="#111">
<text x="924" y="16">2</text><text x="952" y="16">4</text><text x="980" y="16">6</text><text x="1008" y="16">8</text><text x="1036" y="16">10</text><text x="1064" y="16">12</text><text x="1092" y="16">14</text><text x="1120" y="16">16</text><text x="1148" y="16">18</text><text x="1176" y="16">20</text><text x="1204" y="16">22</text><text x="1232" y="16">24</text><text x="1260" y="16">26</text><text x="1288" y="16">28</text><text x="1316" y="16">30</text><text x="1344" y="16">32</text><text x="1372" y="16">34</text><text x="1400" y="16">36</text><text x="1428" y="16">38</text><text x="1456" y="16">40</text><text x="1484" y="16">42</text><text x="1512" y="16">44</text><text x="1540" y="16">46</text><text x="1568" y="16">48</text><text x="1596" y="16">50</text><text x="1624" y="16">52</text><text x="1652" y="16">54</text><text x="1680" y="16">56</text><text x="1708" y="16">58</text><text x="1736" y="16">60</text><text x="1764" y="16">62</text><text x="1792" y="16">64</text><text x="1820" y="16">66</text><text x="1848" y="16">68</text><text x="1876" y="16">70</text><text x="1904" y="16">72</text>
<path d="M1344 3.500H1352L1348 9 1352 14.500V23H1344V14.500L1348 9 1344 3.500ZM1344 16H1352" fill="#e8e4dc" stroke="#222"/>
<path d="M1421 11L1425 16V19H1417V16Z" fill="#fff" stroke="#222"/>
</svg>

<!-- document -->
<div class="a" style="left:880px;top:710px;width:2px;height:342px;background:#555"></div>
<div class="a" style="left:893px;top:710px;width:724px;height:8px;overflow:hidden;background:#fff;font:15px/14px 'Liberation Mono',monospace;color:#111;white-space:pre">
<span class="a" style="left:7px;top:-8px">DOT<i>↵</i></span><span class="a" style="left:131px;top:-8px;font-size:13px;letter-spacing:0">---------------------------------------</span><span class="a" style="left:511px;top:-8px">0.035+Plating<i>↵</i></span>
</div>
<div class="a" style="left:893px;top:718px;width:723px;height:7px;background:#6fcb9f"></div>
<div class="a" style="left:1024px;top:710px;width:1px;height:8px;background:#888"></div>
<div class="a" style="left:893px;top:725px;width:724px;height:18px;border:1px solid #bbb;border-width:0 1px"></div>
<div class="a" style="left:893px;top:812px;width:724px;height:34px;border:1px solid #bbb;border-width:0 1px 0 1px"></div>

<div class="st" style="top:743px"><span style="left:1px">Finished:<i>↵</i></span><span style="left:125px;padding-left:0">1.55(+0.155/-0.155) MM<i>↵</i></span><span style="left:504px;padding-left:0"><i>↵</i></span></div>
<div class="st" style="top:766px"><span style="left:1px">Designed:<i>↵</i></span><span style="left:125px;padding-left:0">1.439 MM<i>↵</i></span><span style="left:504px;padding-left:0"><i>↵</i></span></div>
<div class="st" style="top:789px;border-bottom-width:2px;height:24px"><span style="left:1px">Material:<i>↵</i></span><span style="left:125px;padding-left:0">S1141<i>↵</i></span><span style="left:504px;padding-left:0"><i>↵</i></span></div>
<div class="a" style="left:1618px;top:749px"><i>↵</i></div><div class="a" style="left:1618px;top:772px"><i>↵</i></div><div class="a" style="left:1618px;top:795px"><i>↵</i></div><div class="a" style="left:1618px;top:718px"><i>↵</i></div><div class="a" style="left:1618px;top:818px"><i>↵</i></div>
<div class="a" style="left:897px;top:818px;font:21.6px/30px 'Liberation Mono',monospace;color:#1414e0;white-space:pre">Impedance Information:<i>↵</i></div>
<div class="a" style="left:893px;top:846px;width:1px;height:197px;background:#999"></div>

<table>
<colgroup><col style="width:35px"><col style="width:57px"><col style="width:93px"><col style="width:94px"><col style="width:77px"><col style="width:93px"><col style="width:75px"><col style="width:38px"><col style="width:37px"><col style="width:38px"><col style="width:38px"><col style="width:40px"><col style="width:20px"></colgroup>
<tr><td class="h1">Ctrl</td><td class="h1">Ref<i>↵</i></td><td class="h1">Imp_type<i>↵</i></td><td class="h1">Cust_req<i>↵</i></td><td class="h1">Imp_req<i>↵</i></td><td class="h2">FP_des<i>↵</i></td><td class="h2">Imp_des</td><td class="h1">mask<i>↵</i></td><td class="h1">H1<i>↵</i></td><td class="h1">Er1<i>↵</i></td><td class="h1">H2<i>↵</i></td><td class="h1">Er2<i>↵</i></td><td class="z"><i>↵</i></td></tr>
<tr><td>L1<i>↵</i></td><td>L2<i>↵</i></td><td>Differential<i>↵</i></td><td>3.94/5.98<i>↵</i></td><td>100+/-10%<i>↵</i></td><td>4.3/5.62<i>↵</i></td><td>98.033<i>↵</i></td><td>Yes<i>↵</i></td><td>4.502<i>↵</i></td><td>3.95<i>↵</i></td><td><i>↵</i></td><td><i>↵</i></td><td class="z"><i>↵</i></td></tr>
<tr><td>L3<i>↵</i></td><td>L2/L4<i>↵</i></td><td>Differential<i>↵</i></td><td>3.94/7.874<i>↵</i></td><td>100+/-10%<i>↵</i></td><td>4.4/7.414<i>↵</i></td><td>101.87<i>↵</i></td><td><i>↵</i></td><td>11.81<i>↵</i></td><td>3.85<i>↵</i></td><td>6.581<i>↵</i></td><td>3.65<i>↵</i></td><td class="z"><i>↵</i></td></tr>
<tr><td>L6<i>↵</i></td><td>L5/L7<i>↵</i></td><td>Differential<i>↵</i></td><td>3.94/7.874<i>↵</i></td><td>100+/-10%<i>↵</i></td><td>4.4/7.414<i>↵</i></td><td>101.29<i>↵</i></td><td><i>↵</i></td><td>11.81<i>↵</i></td><td>3.85<i>↵</i></td><td>6.447<i>↵</i></td><td>3.65<i>↵</i></td><td class="z"><i>↵</i></td></tr>
<tr><td>L8<i>↵</i></td><td>L7<i>↵</i></td><td>Differential<i>↵</i></td><td>3.94/5.98<i>↵</i></td><td>100+/-10%<i>↵</i></td><td>4.3/5.62<i>↵</i></td><td>98.015<i>↵</i></td><td>Yes<i>↵</i></td><td>4.499<i>↵</i></td><td>3.95<i>↵</i></td><td><i>↵</i></td><td><i>↵</i></td><td class="z"><i>↵</i></td></tr>
<tr><td>L1<i>↵</i></td><td>L2<i>↵</i></td><td>Single-Ended<i>↵</i></td><td>3.94<i>↵</i></td><td>60+/-10%<i>↵</i></td><td>4.3<i>↵</i></td><td>61.17<i>↵</i></td><td>Yes<i>↵</i></td><td>4.502<i>↵</i></td><td>3.95<i>↵</i></td><td><i>↵</i></td><td><i>↵</i></td><td class="z"><i>↵</i></td></tr>
<tr><td>L8<i>↵</i></td><td>L7<i>↵</i></td><td>Single-Ended<i>↵</i></td><td>3.94<i>↵</i></td><td>60+/-10%<i>↵</i></td><td>4.3<i>↵</i></td><td>61.151<i>↵</i></td><td>Yes<i>↵</i></td><td>4.499<i>↵</i></td><td>3.95<i>↵</i></td><td><i>↵</i></td><td><i>↵</i></td><td class="z"><i>↵</i></td></tr>
<tr><td>L1<i>↵</i></td><td>L2<i>↵</i></td><td>Single-Ended<i>↵</i></td><td>4.921<i>↵</i></td><td>55+/-10%<i>↵</i></td><td>5.3<i>↵</i></td><td class="k">56.482<i>↵</i></td><td>Yes<i>↵</i></td><td>4.502<i>↵</i></td><td>3.95<i>↵</i></td><td><i>↵</i></td><td><i>↵</i></td><td class="z"><i>↵</i></td></tr>
<tr><td>L8<i>↵</i></td><td>L7<i>↵</i></td><td>Single-Ended<i>↵</i></td><td>4.921<i>↵</i></td><td>55+/-10%<i>↵</i></td><td>5.3<i>↵</i></td><td class="k">56.463<i>↵</i></td><td>Yes<i>↵</i></td><td>4.499<i>↵</i></td><td>3.95<i>↵</i></td><td><i>↵</i></td><td><i>↵</i></td><td class="z"><i>↵</i></td></tr>
</table>
<div class="ov" style="left:1229px;top:856px;width:25px;height:12px;background:#99ff00"></div>
<div class="ov" style="left:1255px;top:856px;width:90px;height:12px;background:#ff9900"></div>
<div class="ov" style="left:1229px;top:868px;width:25px;height:22px;background:#ffff00"></div>
<div class="ov" style="left:1255px;top:868px;width:90px;height:22px;background:#ffff00"></div>

<!-- word status -->
<div class="a" style="left:880px;top:1052px;width:1040px;height:4px;background:#d4d0c8;border-top:1px solid #888"></div>
<div class="a" style="left:1845px;top:1030px;width:75px;height:22px;background:#d4d0c8"></div>
<svg class="a" style="left:1845px;top:1030px" width="75" height="22">
<path d="M0 0V22M28 0V22M55 0V22" stroke="#888"/>
<rect x="9" y="9" width="15" height="10" fill="#d8d8d8" stroke="#777"/><path d="M11 12H22M11 15H22" stroke="#999" stroke-dasharray="1 1"/><path d="M16 9L22 4" stroke="#777"/>
<circle cx="43" cy="12" r="8" fill="#1a3a9a"/><text x="40" y="17" font-family="Liberation Sans" font-size="13" font-weight="bold" fill="#fff">?</text>
<rect x="65" y="5" width="4" height="2" fill="#111"/><path d="M64 13H70L67 17Z" fill="#111"/>
</svg>
</body></html>
